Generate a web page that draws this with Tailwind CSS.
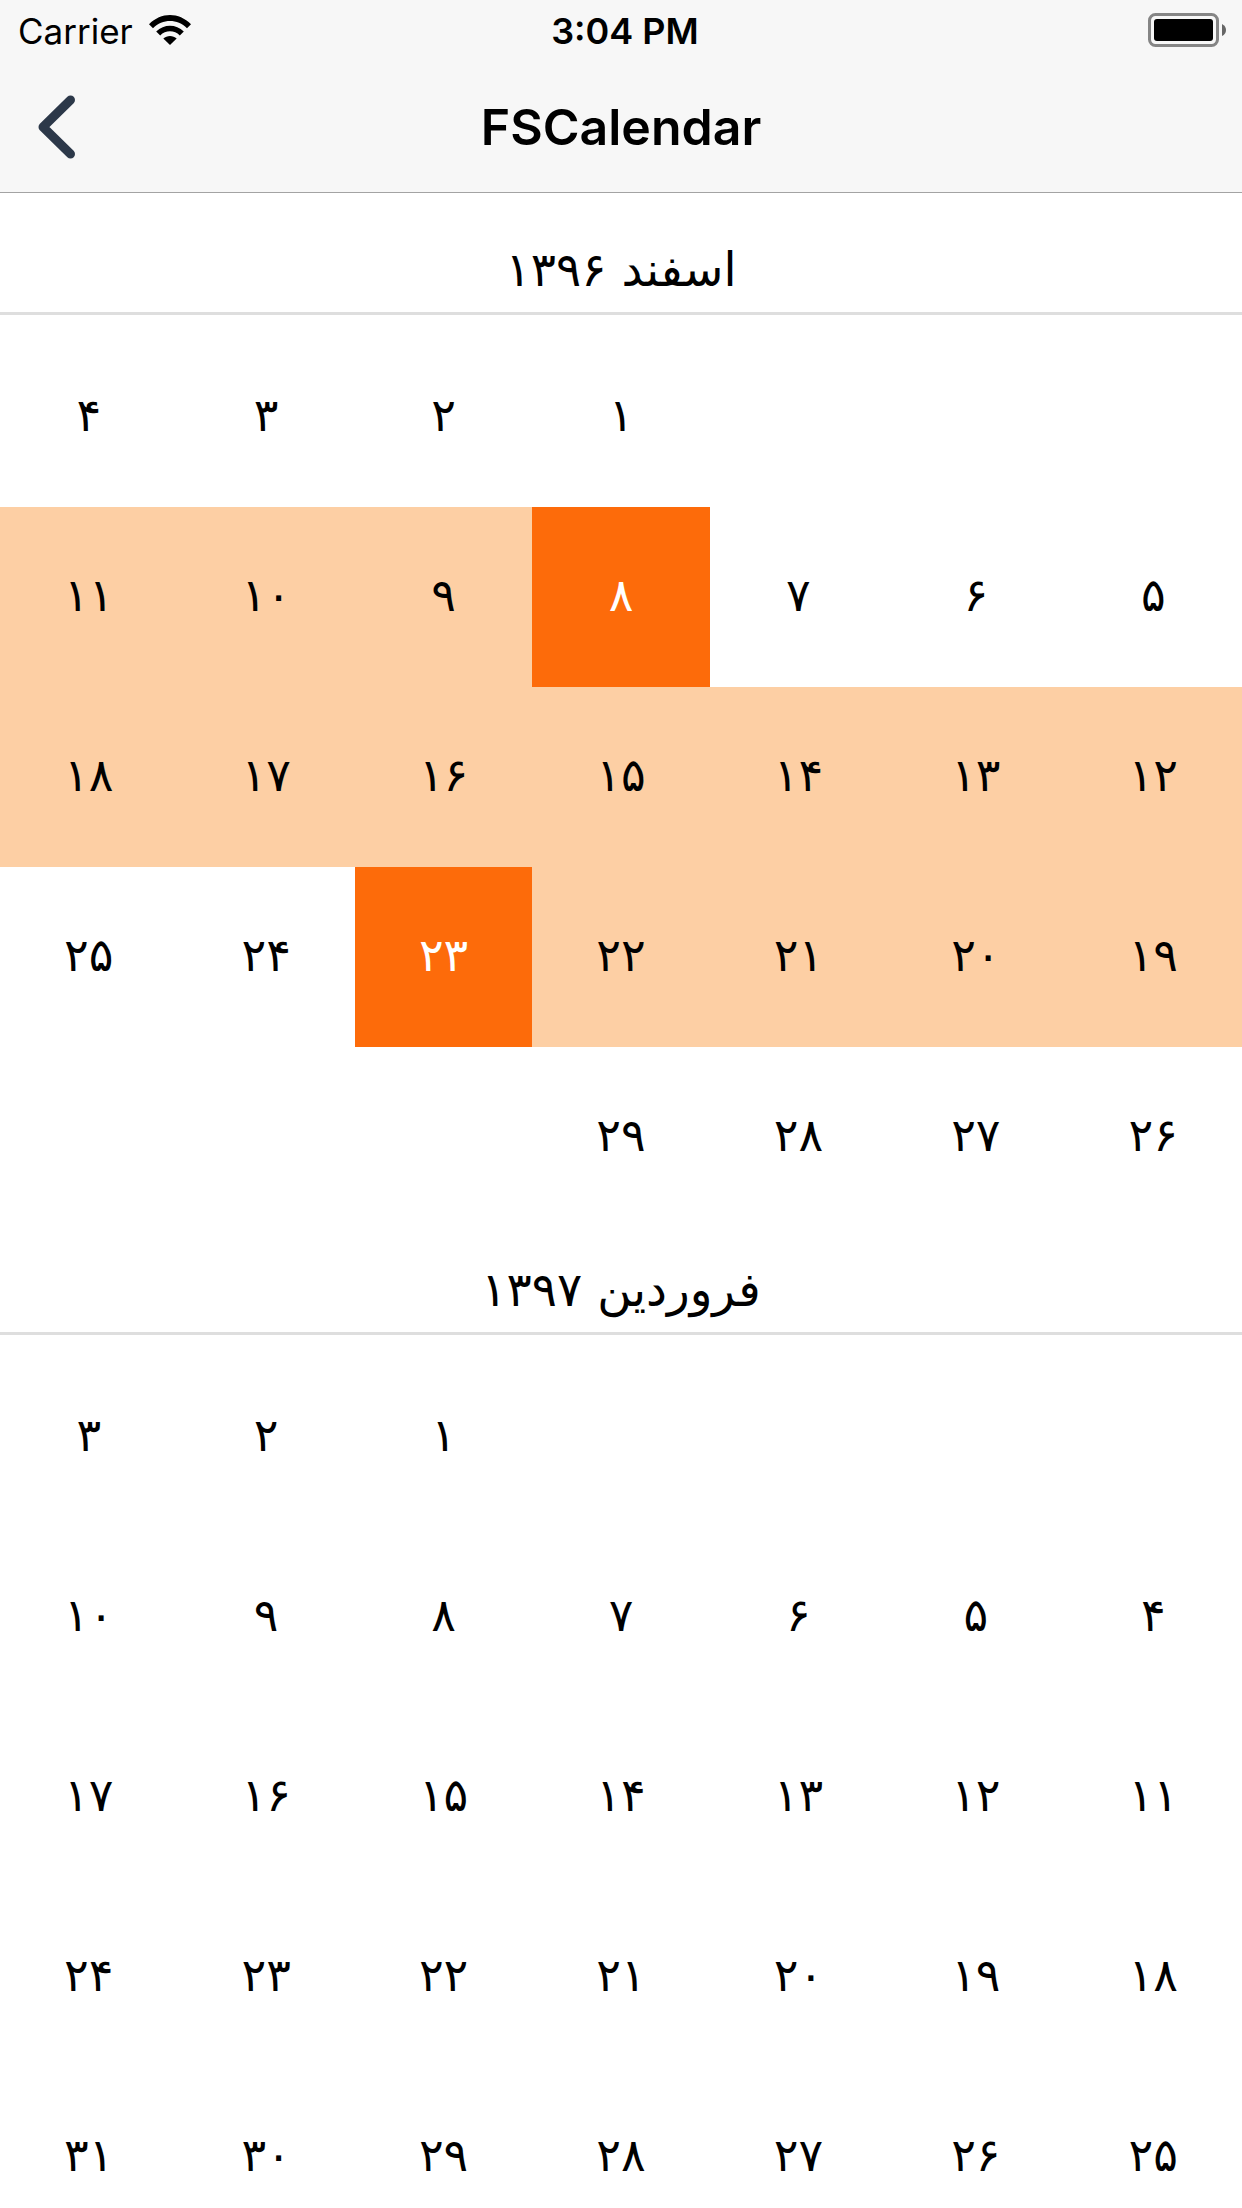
<!DOCTYPE html>
<html lang="en">
<head>
<meta charset="utf-8">
<meta name="viewport" content="width=device-width, initial-scale=1">
<title>FSCalendar</title>
<script src="https://cdn.jsdelivr.net/npm/@tailwindcss/browser@4"></script>
</head>
<body class="flex h-screen flex-col overflow-hidden bg-white font-['Inter',sans-serif] text-black">
<header class="shrink-0 border-b border-[#a3a3a3] bg-[#f7f7f7]">
  <div class="grid h-15 grid-cols-3 items-center px-4">
    <div class="flex items-center gap-4">
      <span class="pl-[2px] pt-[2px] text-[35px] leading-10">Carrier</span>
      <svg class="h-[30px] w-[42px]" viewBox="0 0 42 30" aria-label="Wi-Fi">
        <path d="M0 9.300C12-3.100 30-3.100 42 9.300L38 13.200C28.500 3.700 13.500 3.700 4 13.200Z"/>
        <path d="M7.200 16.500C15 8.700 27 8.700 34.800 16.500L30.800 20.400C25.500 14.900 16.500 14.900 11.200 20.400Z"/>
        <path d="M14.300 23.500C18 20 24 20 27.700 23.500L21 30Z"/>
      </svg>
    </div>
    <span class="pl-2 pt-[2px] text-center text-[36px] leading-10 font-semibold">3:04 PM</span>
    <svg class="h-[34px] w-[78px] justify-self-end" viewBox="0 0 78 34" aria-label="Battery full">
      <rect x="1.500" y="1.500" width="68" height="31" rx="6" fill="none" stroke="#858585" stroke-width="3"/>
      <rect x="6" y="6" width="59" height="22" rx="3"/>
      <path d="M74 11Q78 13 78 17T74 23Z" fill="#666"/>
    </svg>
  </div>
  <nav class="grid h-33 grid-cols-3 items-center px-9 pt-[2px]">
    <button type="button" aria-label="Back" class="justify-self-start">
      <svg class="h-16 w-10" viewBox="0 0 40 64" fill="none" stroke="#2c3849" stroke-width="9" stroke-linecap="round" stroke-linejoin="round"><path d="M34.500 5L7 32L34.500 59"/></svg>
    </button>
    <h1 class="text-center text-[50px] leading-16 font-semibold">FSCalendar</h1>
  </nav>
</header>
<main id="calendar" lang="fa" dir="rtl" class="min-h-0 flex-1 overflow-y-auto pt-[14px] font-['DejaVu_Sans',sans-serif] [scrollbar-width:none]"></main>
<script>
const months = [
  { name: 'اسفند', year: 1396, offset: 3, days: 29, from: 8, to: 23 },
  { name: 'فروردین', year: 1397, offset: 4, days: 31 }
];
const fa = n => String(n).replace(/\d/g, d => '۰۱۲۳۴۵۶۷۸۹'[d]);

function cell(month, day) {
  if (day < 1 || day > month.days) return '<td class="p-0"></td>';
  let tone = '';
  if (day === month.from || day === month.to) tone = 'bg-[#fd6b0a] text-white';
  else if (day > month.from && day < month.to) tone = 'bg-[#fdcfa4]';
  return `<td class="p-0 ${tone}"><button type="button" class="block h-45 w-full pb-1 text-center text-[46px] leading-16">${fa(day)}</button></td>`;
}

document.getElementById('calendar').innerHTML = months.map(month => {
  let rows = '';
  for (let start = 1 - month.offset; start <= month.days; start += 7) {
    rows += '<tr class="h-45">';
    for (let day = start; day < start + 7; day++) rows += cell(month, day);
    rows += '</tr>';
  }
  return `<section>
    <h2 class="mb-3 flex h-27 items-center justify-center border-b-3 border-[#dedede] pt-5 text-[47px] leading-16">${month.name} ${fa(month.year)}</h2>
    <table class="w-full table-fixed border-collapse"><tbody>${rows}</tbody></table>
  </section>`;
}).join('');
</script>
</body>
</html>
